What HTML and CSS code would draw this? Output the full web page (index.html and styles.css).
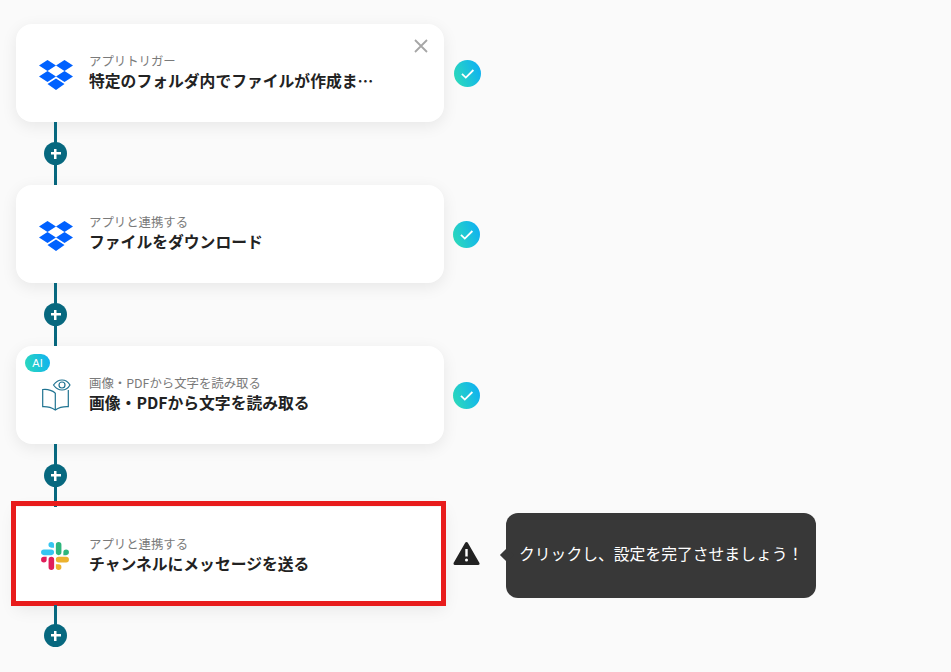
FILE: index.html
```html
<!DOCTYPE html>
<html lang="ja">
  <head>
    <meta charset="UTF-8" />
    <meta name="viewport" content="width=device-width, initial-scale=1.0" />
    <title>フロー</title>
    <link rel="stylesheet" href="styles.css">
  </head>
  <body>
    <svg class="defs" width="0" height="0">
      <defs>
        <linearGradient id="teal" x1="0" y1="0.7" x2="1" y2="0.3">
          <stop offset="0" stop-color="#2cdabb" />
          <stop offset="1" stop-color="#0fb0f2" />
        </linearGradient>
        <symbol id="dropbox" viewBox="0 0 34 30">
          <path fill="#0061ff" d="M8.500 0 17 5.500 8.500 11 0 5.500ZM25.500 0 34 5.500 25.500 11 17 5.500ZM0 16.500 8.500 11 17 16.500 8.500 22ZM25.500 11 34 16.500 25.500 22 17 16.500ZM8.500 24 17 18.500 25.500 24 17 30Z" />
        </symbol>
        <symbol id="check" viewBox="0 0 27 27">
          <circle cx="13.500" cy="13.500" r="13.500" fill="url(#teal)" />
          <path d="M8 13.800 11.800 17.600 19.400 10" fill="none" stroke="#fff" stroke-width="1.800" />
        </symbol>
      </defs>
    </svg>

    <div class="flow">
      <div class="step">
        <div class="card">
          <svg class="app-icon" width="34" height="30"><use href="#dropbox" /></svg>
          <div class="card-text">
            <p class="label">アプリトリガー</p>
            <p class="title">特定のフォルダ内でファイルが作成ま…</p>
          </div>
          <svg class="close" width="16" height="16" viewBox="0 0 16 16">
            <path d="M2 2 14 14M14 2 2 14" stroke="#a6a6a6" stroke-width="1.800" />
          </svg>
        </div>
        <svg class="status first" width="27" height="27"><use href="#check" /></svg>
      </div>
      <div class="link"><span class="plus"></span></div>

      <div class="step">
        <div class="card">
          <svg class="app-icon" width="34" height="30"><use href="#dropbox" /></svg>
          <div class="card-text">
            <p class="label">アプリと連携する</p>
            <p class="title">ファイルをダウンロード</p>
          </div>
        </div>
        <svg class="status" width="27" height="27"><use href="#check" /></svg>
      </div>
      <div class="link"><span class="plus"></span></div>

      <div class="step">
        <div class="card">
          <span class="badge">AI</span>
          <svg class="book-icon" width="34" height="36" viewBox="0 0 34 36" fill="none" stroke="#1f7391" stroke-width="1.200">
            <path d="M16.300 17C12.500 14 8 13 3.700 13.500V30.700C8 30.500 12.500 31.500 16.300 34C20 31.500 25 30.500 29.300 30.700V14" />
            <path d="M16.300 17V34" />
            <path d="M14.500 9C17 5.500 20 4 23 4C26 4 29 5.500 31 9C29 12.500 26 14 23 14C20 14 17 12.500 14.500 9Z" />
            <circle cx="23" cy="9" r="3" />
          </svg>
          <div class="card-text">
            <p class="label">画像・PDFから文字を読み取る</p>
            <p class="title">画像・PDFから文字を読み取る</p>
          </div>
        </div>
        <svg class="status" width="27" height="27"><use href="#check" /></svg>
      </div>
      <div class="link"><span class="plus"></span></div>

      <div class="step">
        <div class="card selected">
          <svg class="slack-icon" width="30" height="30" viewBox="0 0 28 28">
            <path fill="#36c5f0" d="M10.500 1a2.600 2.600 0 0 0 0 5.200h2.600V3.600A2.600 2.600 0 0 0 10.500 1ZM3.600 8a2.600 2.600 0 0 0 0 5.200h6.900a2.600 2.600 0 0 0 0-5.200Z" />
            <path fill="#2eb67d" d="M27 10.600a2.600 2.600 0 0 0-5.200 0v2.600h2.600a2.600 2.600 0 0 0 2.600-2.600ZM20 3.600a2.600 2.600 0 0 0-5.200 0v7a2.600 2.600 0 0 0 5.200 0Z" />
            <path fill="#ecb22e" d="M17.400 27a2.600 2.600 0 0 0 0-5.200h-2.600v2.600a2.600 2.600 0 0 0 2.600 2.600ZM17.400 20H24.400a2.600 2.600 0 0 0 0-5.200h-7a2.600 2.600 0 0 0 0 5.200Z" />
            <path fill="#e01e5a" d="M1 17.400a2.600 2.600 0 0 0 5.200 0v-2.600H3.600A2.600 2.600 0 0 0 1 17.400ZM8 17.400v7a2.600 2.600 0 0 0 5.200 0v-7a2.600 2.600 0 0 0-5.200 0Z" />
          </svg>
          <div class="card-text">
            <p class="label">アプリと連携する</p>
            <p class="title">チャンネルにメッセージを送る</p>
          </div>
        </div>
        <svg class="status warn" width="27" height="25" viewBox="0 0 27 25">
          <path fill="#222" stroke="#222" stroke-width="3" stroke-linejoin="round" d="M13.500 2.500 25 22.500H2Z" />
          <path stroke="#fff" stroke-width="2.400" d="M13.500 8V15.500" />
          <circle cx="13.500" cy="19" r="1.500" fill="#fff" />
        </svg>
        <div class="tip">クリックし、設定を完了させましょう！</div>
      </div>
      <div class="link last"><span class="plus"></span></div>
    </div>
  </body>
</html>
```

FILE: styles.css
```css
*,
*::before,
*::after {
  box-sizing: border-box;
}

html,
body {
  height: 100%;
}

body {
  margin: 0;
  background: #fafafa;
  font-family: "Noto Sans CJK JP", "Noto Sans", sans-serif;
  overflow: hidden;
}

.defs {
  display: block;
  height: 0;
}

.flow {
  padding: 24px 0 0 16px;
}

.step {
  display: flex;
  align-items: center;
  height: 98px;
}

.card {
  position: relative;
  display: flex;
  align-items: center;
  flex: none;
  width: 428px;
  height: 98px;
  background: #fff;
  border-radius: 16px;
  box-shadow: 0 4px 16px rgba(0, 0, 0, 0.08);
}

.card.selected {
  border-radius: 0;
}

.card.selected::after {
  content: "";
  position: absolute;
  top: -6px;
  left: -5px;
  width: 435px;
  height: 105px;
  border: 5px solid #e81c1c;
}

.app-icon {
  flex: none;
  margin: 3px 0 0 23px;
}

.book-icon {
  flex: none;
  margin: 0 0 2px 23px;
}

.slack-icon {
  flex: none;
  margin: 0 3px 0 24px;
}

.card-text {
  margin-left: 16px;
}

.label {
  margin: 0;
  color: #7a7a7a;
  font-size: 12.4px;
  line-height: 16px;
}

.title {
  margin: 0;
  color: #222;
  font-size: 15.8px;
  font-weight: 700;
  line-height: 24px;
}

.close {
  position: absolute;
  top: 14px;
  right: 15px;
}

.badge {
  position: absolute;
  top: 8px;
  left: 9px;
  width: 25px;
  height: 18px;
  border-radius: 9px;
  background: linear-gradient(75deg, #2cdabb, #0fb0f2);
  color: #fff;
  font-family: "Liberation Sans", sans-serif;
  font-size: 11px;
  line-height: 18px;
  text-align: center;
}

.status {
  flex: none;
  margin-left: 9px;
}

.status.first {
  margin-left: 10px;
}

.status.warn {
  margin-bottom: 6px;
}

.link {
  position: relative;
  width: 3px;
  height: 63px;
  margin-left: 38px;
  background: #07687f;
}

.link.last {
  height: 40px;
}

.plus {
  position: absolute;
  top: 20px;
  left: -10px;
  width: 23px;
  height: 23px;
  border-radius: 50%;
  background:
    linear-gradient(#fff, #fff) center / 10px 2.500px no-repeat,
    linear-gradient(#fff, #fff) center / 2.500px 10px no-repeat,
    #07687f;
}

.link.last .plus {
  top: 19px;
}

.tip {
  position: relative;
  flex: none;
  width: 310px;
  height: 85px;
  margin: 0 0 2px 26px;
  padding-left: 13px;
  border-radius: 12px;
  background: #383838;
  color: #fff;
  font-size: 15.8px;
  line-height: 81px;
}

.tip::before {
  content: "";
  position: absolute;
  top: 37px;
  left: -4px;
  width: 10px;
  height: 10px;
  background: #383838;
  transform: rotate(45deg);
}
```
